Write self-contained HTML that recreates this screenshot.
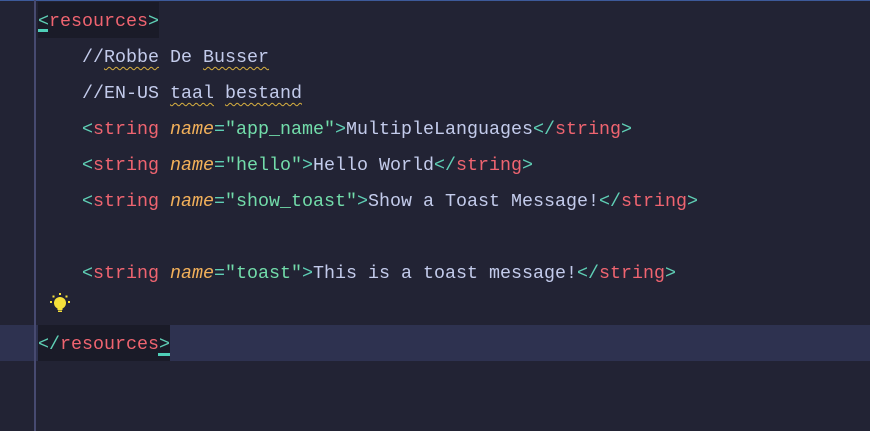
<!DOCTYPE html>
<html><head><style>
html,body{margin:0;padding:0;}
body{width:870px;height:431px;background:#222334;position:relative;overflow:hidden;font-family:"Liberation Mono",monospace;font-size:18.33px;}
.top{position:absolute;left:0;top:0;width:870px;height:1px;background:#3d5a9a;}
.gut{position:absolute;left:34px;top:0;width:2px;height:431px;background:#474a70;}
.cur{position:absolute;left:0;top:325px;width:870px;height:36px;background:#2e3250;}
.hl{position:absolute;background:#1a1b28;height:36px;}
.ln{position:absolute;left:38px;height:36px;line-height:36px;padding-top:2px;white-space:pre;color:#c3cbeb;}
.b{color:#5fcfb5}.t{color:#ef6470}.a{color:#f2b05a;font-style:italic}.s{color:#72dcaa}
.w{text-decoration:underline wavy #d8b040;text-decoration-thickness:1px;text-underline-offset:4px}
.cu{position:absolute;height:3px;background:#4fcfb8;}
</style></head><body>
<div class="top"></div>
<div class="cur"></div>
<div class="hl" style="left:38px;top:2px;width:121px"></div>
<div class="hl" style="left:38px;top:325px;width:132px"></div>
<div class="gut"></div>
<div class="ln" style="top:2px"><span class="b">&lt;</span><span class="t">resources</span><span class="b">&gt;</span></div>
<div class="cu" style="left:38px;top:29px;width:10px"></div>
<div class="ln" style="top:38px">    //<span class="w">Robbe</span> De <span class="w">Busser</span></div>
<div class="ln" style="top:74px">    //EN-US <span class="w">taal</span> <span class="w">bestand</span></div>
<div class="ln" style="top:110px">    <span class="b">&lt;</span><span class="t">string</span> <span class="a">name</span><span class="b">=</span><span class="s">"app_name"</span><span class="b">&gt;</span>MultipleLanguages<span class="b">&lt;/</span><span class="t">string</span><span class="b">&gt;</span></div>
<div class="ln" style="top:146px">    <span class="b">&lt;</span><span class="t">string</span> <span class="a">name</span><span class="b">=</span><span class="s">"hello"</span><span class="b">&gt;</span>Hello World<span class="b">&lt;/</span><span class="t">string</span><span class="b">&gt;</span></div>
<div class="ln" style="top:182px">    <span class="b">&lt;</span><span class="t">string</span> <span class="a">name</span><span class="b">=</span><span class="s">"show_toast"</span><span class="b">&gt;</span>Show a Toast Message!<span class="b">&lt;/</span><span class="t">string</span><span class="b">&gt;</span></div>
<div class="ln" style="top:254px">    <span class="b">&lt;</span><span class="t">string</span> <span class="a">name</span><span class="b">=</span><span class="s">"toast"</span><span class="b">&gt;</span>This is a toast message!<span class="b">&lt;/</span><span class="t">string</span><span class="b">&gt;</span></div>
<svg style="position:absolute;left:48px;top:292px" width="24" height="24" viewBox="0 0 24 24">
<g fill="#f5e03a"><circle cx="12" cy="11" r="6"/><rect x="9.5" y="15" width="5" height="3"/><rect x="10" y="18.5" width="4" height="1.5"/>
<rect x="11" y="1" width="2" height="2"/><rect x="2" y="9" width="2" height="2"/><rect x="20" y="9" width="2" height="2"/>
<rect x="4.5" y="3.5" width="2" height="2"/><rect x="17.5" y="3.5" width="2" height="2"/></g></svg>
<div class="ln" style="top:325px"><span class="b">&lt;/</span><span class="t">resources</span><span class="b">&gt;</span></div>
<div class="cu" style="left:158px;top:353px;width:12px"></div>
</body></html>
